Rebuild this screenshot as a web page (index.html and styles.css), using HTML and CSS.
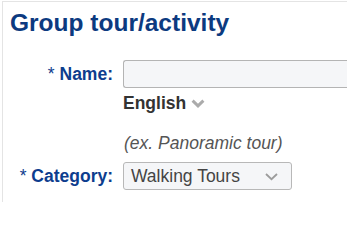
FILE: index.html
```html
<!DOCTYPE html>
<html lang="en">
<head>
<meta charset="utf-8">
<title>Group tour/activity</title>
<link rel="stylesheet" href="styles.css">
</head>
<body>
<div class="panel">
  <h1 class="title">Group tour/activity</h1>
  <div class="form">
    <div class="label"><span class="req">*</span> Name:</div>
    <div class="field">
      <div class="input"></div>
      <div class="lang">English
        <svg class="lang-chev" width="14" height="9" viewBox="0 0 14 9"><path d="M1.6 1.6 L7 6.8 L12.4 1.6" fill="none" stroke="#ababab" stroke-width="3"/></svg>
      </div>
      <div class="hint">(ex. Panoramic tour)</div>
    </div>
    <div class="label cat"><span class="req">*</span> Category:</div>
    <div class="field cat">
      <div class="select">
        <span class="select-text">Walking Tours</span>
        <svg class="select-chev" width="13" height="8" viewBox="0 0 13 8"><path d="M1 1 L6.5 6.2 L12 1" fill="none" stroke="#9c9c9c" stroke-width="1.8"/></svg>
      </div>
    </div>
  </div>
</div>
</body>
</html>
```
FILE: styles.css
```css
html, body {
  margin: 0;
  padding: 0;
  background: #ffffff;
  overflow: hidden;
}
body {
  width: 347px;
  height: 202px;
  font-family: "Liberation Sans", Arial, sans-serif;
}
.panel {
  margin: 1px 0 0 2px;
  border-top: 1px solid #e4e4e4;
  border-left: 1px solid #e4e4e4;
  height: 201px;
  padding: 7px 0 0 7px;
  box-sizing: border-box;
}
.title {
  margin: 0;
  font-size: 24.5px;
  line-height: 28px;
  font-weight: bold;
  color: #0c3a80;
}
.form {
  display: grid;
  grid-template-columns: 103px 224px;
  column-gap: 10px;
  margin-top: 23px;
}
.label {
  text-align: right;
  font-size: 17.5px;
  line-height: 20px;
  font-weight: bold;
  color: #0d3d8e;
  padding-top: 4px;
  white-space: nowrap;
}
.req {
  font-weight: normal;
}
.field {
  display: flex;
  flex-direction: column;
  align-items: flex-start;
}
.input {
  width: 224px;
  height: 28px;
  box-sizing: border-box;
  border: 1px solid #b4b4b4;
  border-right: none;
  border-radius: 3px 0 0 3px;
  background: #f5f6f8;
}
.lang {
  margin-top: 5px;
  display: flex;
  align-items: center;
  gap: 5px;
  font-size: 17.5px;
  line-height: 20px;
  font-weight: bold;
  color: #333333;
}
.lang-chev {
  margin-top: 1px;
}
.hint {
  margin-top: 20px;
  font-size: 17.5px;
  line-height: 20px;
  font-style: italic;
  color: #555555;
  padding-left: 1px;
}
.cat {
  margin-top: 9px;
}
.select {
  width: 169px;
  height: 28px;
  box-sizing: border-box;
  border: 1px solid #b8b8b8;
  border-radius: 3px;
  background: #f5f6f8;
  display: flex;
  align-items: center;
  justify-content: space-between;
  padding: 0 13px 0 7px;
}
.select-text {
  font-size: 17.5px;
  line-height: 20px;
  color: #444444;
}
.select-chev {
  margin-top: 1px;
}
```
